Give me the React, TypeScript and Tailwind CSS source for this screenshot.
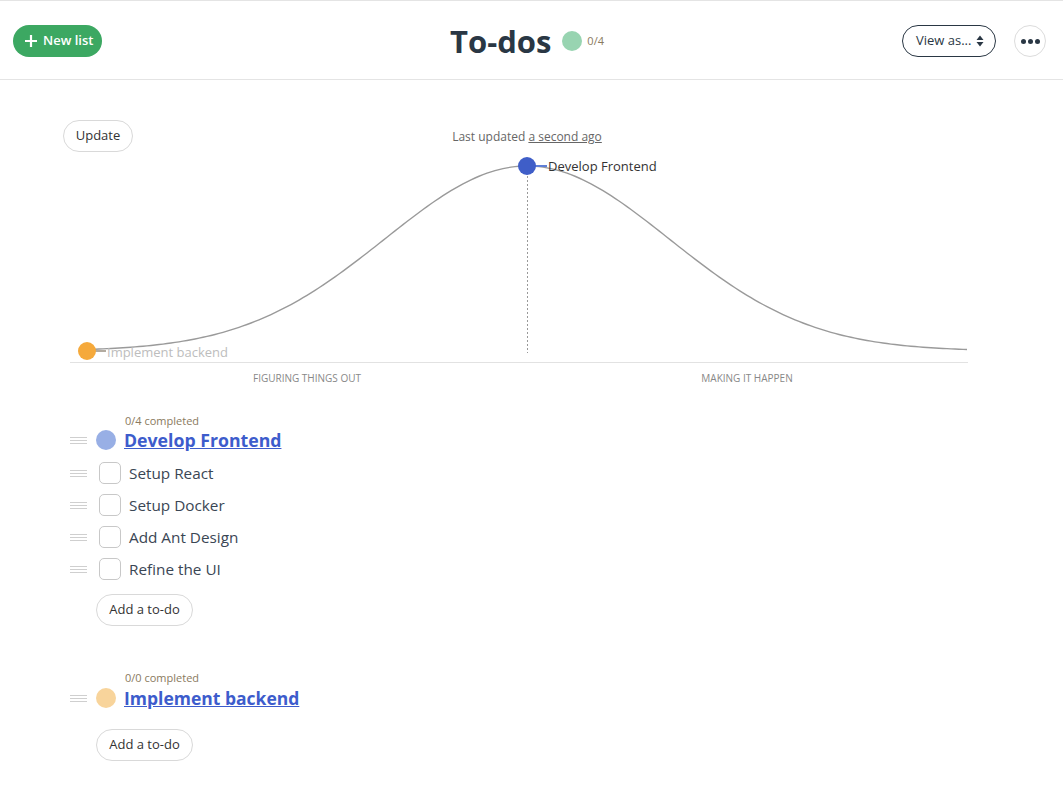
import { FC } from "react";

const todos = ["Setup React", "Setup Docker", "Add Ant Design", "Refine the UI"];

// gaussian hill, svg coords (left = 63px, top = 152px on the page)
const hillPath = () => {
  const pts: string[] = [];
  for (let x = 24; x <= 904; x += 4) {
    const dx = x - 464;
    const y = 199 - 185 * Math.exp(-(dx * dx) / (2 * 142 * 142));
    pts.push(`${x},${y.toFixed(2)}`);
  }
  return "M" + pts.join(" L");
};

const DragHandle: FC = () => (
  <div className="flex w-[17px] flex-col gap-[2px]">
    <span className="h-px w-full bg-[#cfcfcf]" />
    <span className="h-px w-full bg-[#cfcfcf]" />
    <span className="h-px w-full bg-[#cfcfcf]" />
  </div>
);

const AddButton: FC = () => (
  <button className="h-8 w-[97px] rounded-full border border-[#d9d9d9] bg-white text-[13px] text-[#333]">
    Add a to-do
  </button>
);

const App: FC = () => {
  return (
    <div className="min-h-[791px] bg-white font-['Open_Sans',sans-serif] text-[#333]">
      <header className="grid h-20 grid-cols-[1fr_auto_1fr] items-center border-y border-[#e4e4e4] px-[13px] pt-[2px]">
        <div>
          <button className="flex h-8 w-[89px] items-center gap-[5px] rounded-full bg-[#3ca862] pl-[11px] text-[13px] font-semibold text-white">
            <svg width="14" height="14" viewBox="0 0 14 14">
              <path d="M7 1v12M1 7h12" stroke="white" strokeWidth="2.2" />
            </svg>
            New list
          </button>
        </div>
        <div className="mr-[9px] flex items-center">
          <h1 className="text-[31px] font-bold leading-none text-[#2a3744]">To-dos</h1>
          <span className="ml-[11px] h-5 w-5 rounded-full bg-[#98d4b1]" />
          <span className="ml-[5px] text-[11px] text-[#8a7a5e]">0/4</span>
        </div>
        <div className="flex items-center justify-end gap-[18px] pr-[4px]">
          <button className="flex h-8 w-[94px] items-center justify-between rounded-full border border-[#2a3744] pl-[13px] pr-[11px] text-[13px] text-[#2a3744]">
            View as...
            <svg width="8" height="12" viewBox="0 0 8 12">
              <path d="M4 0.5L7.5 5H0.5z M4 11.5L0.5 7H7.5z" fill="#2a3744" />
            </svg>
          </button>
          <button className="flex h-8 w-8 items-center justify-center gap-[2px] rounded-full border border-[#dcdcdc]">
            <span className="h-[5px] w-[5px] rounded-full bg-[#2a3744]" />
            <span className="h-[5px] w-[5px] rounded-full bg-[#2a3744]" />
            <span className="h-[5px] w-[5px] rounded-full bg-[#2a3744]" />
          </button>
        </div>
      </header>

      <section className="ml-[63px] mt-10 w-[928px]">
        <div className="grid h-8 grid-cols-[1fr_auto_1fr] items-center">
          <div>
            <button className="h-8 w-[70px] rounded-full border border-[#d9d9d9] bg-white text-[13px] text-[#333]">
              Update
            </button>
          </div>
          <p className="pt-px text-[12px] text-[#666]">
            Last updated <span className="underline">a second ago</span>
          </p>
          <div />
        </div>
        <svg width="928" height="212" viewBox="0 0 928 212" className="block">
          <line x1="7" y1="210.5" x2="905" y2="210.5" stroke="#e2e2e2" strokeWidth="1" />
          <line x1="464.5" y1="24" x2="464.5" y2="201" stroke="#999" strokeWidth="1" strokeDasharray="2 2" />
          <path d={hillPath()} fill="none" stroke="#9a9a9a" strokeWidth="1.4" />
          <line x1="470" y1="14" x2="484" y2="14" stroke="#5f7fd6" strokeWidth="2" />
          <line x1="30" y1="199" x2="43" y2="199" stroke="#9a8f80" strokeWidth="1.5" />
          <circle cx="24" cy="199" r="9" fill="#f5a93b" />
          <circle cx="464" cy="14" r="9" fill="#3f5ec8" />
          <text x="485" y="19" fontSize="13" fill="#333" fontFamily="Open Sans, sans-serif">
            Develop Frontend
          </text>
          <text x="44" y="205" fontSize="13" fill="#bdbdbd" fontFamily="Open Sans, sans-serif">
            Implement backend
          </text>
        </svg>
        <div className="ml-[24px] mt-[7px] grid w-[880px] grid-cols-2 text-center text-[10px] uppercase leading-[14px] text-[#888]">
          <span>Figuring things out</span>
          <span>Making it happen</span>
        </div>
      </section>

      <section className="mt-[29px] pl-[70px]">
        <div>
          <p className="ml-[55px] h-[14px] text-[11px] leading-[14px] text-[#8a7a5e]">0/4 completed</p>
          <div className="flex h-6 items-center">
            <DragHandle />
            <span className="ml-[9px] h-5 w-5 rounded-full bg-[#98afe5]" />
            <a className="ml-2 text-[17.7px] font-bold text-[#3d5ccc] underline">Develop Frontend</a>
          </div>
          <ul className="mt-[5px]">
            {todos.map((t) => (
              <li key={t} className="flex h-8 items-center">
                <DragHandle />
                <span className="ml-[12px] h-[22px] w-[22px] rounded-[5px] border border-[#c8c8c8]" />
                <span className="ml-2 text-[15.3px] text-[#3a4654]">{t}</span>
              </li>
            ))}
          </ul>
          <div className="ml-[26px] mt-[9px]">
            <AddButton />
          </div>
        </div>

        <div className="mt-[45px]">
          <p className="ml-[55px] h-[14px] text-[11px] leading-[14px] text-[#8a7a5e]">0/0 completed</p>
          <div className="flex h-[26px] items-center">
            <DragHandle />
            <span className="ml-[9px] h-5 w-5 rounded-full bg-[#f8d49b]" />
            <a className="ml-2 text-[17.5px] font-bold text-[#3d5ccc] underline">Implement backend</a>
          </div>
          <div className="ml-[26px] mt-[18px]">
            <AddButton />
          </div>
        </div>
      </section>
    </div>
  );
};

export default App;
